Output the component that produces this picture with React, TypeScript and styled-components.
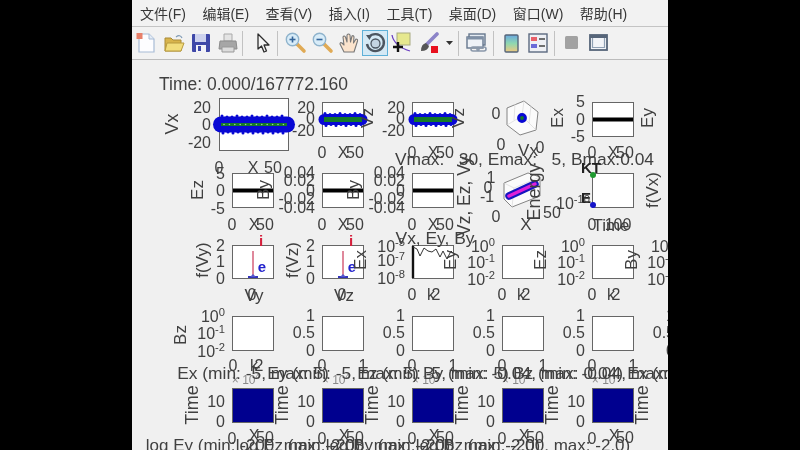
import React from "react";
import styled, { createGlobalStyle } from "styled-components";

const Global = createGlobalStyle`
  html, body { margin: 0; padding: 0; background: #000; width: 800px; height: 450px; overflow: hidden; }
  #root { width: 800px; height: 450px; }
`;

const Stage = styled.div`
  width: 800px;
  height: 450px;
  background: #000;
  display: flex;
  justify-content: center;
`;
const Win = styled.div`
  width: 536px;
  height: 450px;
  background: #f0f0f0;
  display: flex;
  flex-direction: column;
  overflow: hidden;
  filter: blur(0.65px);
`;
const MenuBar = styled.div`
  height: 27px;
  box-sizing: border-box;
  flex: none;
  display: flex;
  align-items: center;
  gap: 16.5px;
  padding: 0 0 0 8px;
  background: #f2f2f2;
  border-bottom: 1px solid #c4c4c4;
  font: 14px "Liberation Sans", "Noto Sans CJK SC", sans-serif;
  color: #383838;
`;
const MenuItem = styled.span`
  white-space: nowrap;
`;
const Toolbar = styled.div`
  height: 33px;
  box-sizing: border-box;
  flex: none;
  display: flex;
  align-items: center;
  padding-left: 1px;
  background: #f2f2f2;
  border-bottom: 1px solid #bcbcbc;
`;
const Tool = styled.div<{ $w?: number; $on?: boolean }>`
  width: ${(p) => p.$w ?? 27}px;
  height: 26px;
  box-sizing: border-box;
  flex: none;
  display: flex;
  align-items: center;
  justify-content: center;
  background: ${(p) => (p.$on ? "#d5e9f5" : "transparent")};
  border: ${(p) => (p.$on ? "1px solid #5fb0d8" : "none")};
`;
const Sep = styled.div<{ $l: number; $r: number }>`
  width: 1px;
  height: 25px;
  flex: none;
  margin: 0 ${(p) => p.$r}px 0 ${(p) => p.$l}px;
  background: #c2c2c2;
`;
const Canvas = styled.div`
  position: relative;
  flex: 1;
  overflow: hidden;
  font-family: "Liberation Sans", sans-serif;
  color: #404040;
`;
const OX = 132;
const OY = 60;
const Axes = styled.div<{ $x: number; $y: number; $w: number; $h: number; $fill?: string }>`
  position: absolute;
  left: ${(p) => p.$x - OX}px;
  top: ${(p) => p.$y - OY}px;
  width: ${(p) => p.$w}px;
  height: ${(p) => p.$h}px;
  box-sizing: border-box;
  border: 1px solid #666;
  background: ${(p) => p.$fill ?? "#fff"};
`;
const Overlay = styled.svg<{ $x: number; $y: number }>`
  position: absolute;
  left: ${(p) => p.$x - OX}px;
  top: ${(p) => p.$y - OY}px;
  overflow: visible;
`;
const Text = styled.span<{ $x: number; $y: number; $a: string; $rot?: boolean; $size: number; $color?: string; $bold?: boolean }>`
  position: absolute;
  left: ${(p) => p.$x - OX}px;
  top: ${(p) => p.$y - OY}px;
  transform: translate(${(p) => (p.$a === "r" ? "-100%" : p.$a === "l" ? "0" : "-50%")}, -50%) ${(p) => (p.$rot ? "rotate(-90deg)" : "")};
  font-size: ${(p) => p.$size}px;
  font-weight: ${(p) => (p.$bold ? 700 : 400)};
  color: ${(p) => p.$color ?? "inherit"};
  line-height: 1;
  white-space: pre;
`;
const Sup = styled.sup`
  font-size: 0.7em;
  vertical-align: 0.55em;
  line-height: 0;
`;

type L = { t: string; x: number; y: number; a?: string; rot?: boolean; s?: number; c?: string; b?: boolean };
const COLS = [232, 322, 412, 502, 592];
const TITLE = 17.4;

const labels: L[] = [
  { t: "Time: 0.000/167772.160", x: 159, y: 85, a: "l", s: 17.5 },
  { t: "Vx", x: 172, y: 124, rot: true, s: 18 },
  { t: "20", x: 211, y: 108, a: "r" }, { t: "0", x: 211, y: 125, a: "r" }, { t: "-20", x: 211, y: 143, a: "r" },
  { t: "0", x: 219, y: 168 }, { t: "X", x: 253, y: 168 }, { t: "50", x: 273, y: 168 },

  { t: "20", x: 315, y: 108, a: "r" }, { t: "0", x: 315, y: 119, a: "r" }, { t: "-20", x: 315, y: 131, a: "r" },
  { t: "Vz", x: 367, y: 118, rot: true },
  { t: "0", x: 322, y: 153 }, { t: "X", x: 343, y: 153 }, { t: "50", x: 355, y: 153 },
  { t: "20", x: 405, y: 108, a: "r" }, { t: "0", x: 405, y: 119, a: "r" }, { t: "-20", x: 405, y: 131, a: "r" },
  { t: "Vz", x: 458, y: 118, rot: true },
  { t: "0", x: 412, y: 153 }, { t: "X", x: 433, y: 153 }, { t: "50", x: 445, y: 153 },

  { t: "0", x: 496, y: 114 }, { t: "0", x: 501, y: 145 }, { t: "Vx", x: 528, y: 150, s: 17 }, { t: "0", x: 540, y: 148 },
  { t: "Ex", x: 557, y: 118, rot: true },
  { t: "5", x: 585, y: 102, a: "r" }, { t: "0", x: 585, y: 120, a: "r" }, { t: "-5", x: 585, y: 137, a: "r" },
  { t: "Ey", x: 647, y: 118, rot: true },
  { t: "0", x: 592, y: 153 }, { t: "X", x: 613, y: 153 }, { t: "50", x: 625, y: 153 },
  { t: "Vmax:   30, Emax:   5, Bmax:0.04", x: 395, y: 160, a: "l", s: TITLE },

  { t: "Ez", x: 197, y: 190, rot: true },
  { t: "5", x: 225, y: 174, a: "r" }, { t: "0", x: 225, y: 191, a: "r" }, { t: "-5", x: 225, y: 209, a: "r" },
  { t: "0", x: 232, y: 225 }, { t: "X", x: 254, y: 225 }, { t: "50", x: 265, y: 225 },
  { t: "By", x: 263, y: 190, rot: true },
  { t: "By", x: 353, y: 190, rot: true },
  { t: "0", x: 322, y: 225 }, { t: "X", x: 343, y: 225 }, { t: "50", x: 355, y: 225 },
  ...[315, 405].flatMap((x) => [
    { t: "0.04", x, y: 173, a: "r" }, { t: "0.02", x, y: 181, a: "r" }, { t: "0", x, y: 191, a: "r" },
    { t: "-0.02", x, y: 199, a: "r" }, { t: "-0.04", x, y: 208, a: "r" },
  ]),
  { t: "0", x: 412, y: 225 }, { t: "X", x: 433, y: 225 }, { t: "50", x: 445, y: 225 },
  { t: "Vz, Ez, Vy", x: 465, y: 196, rot: true, s: 17.5 },
  { t: "1", x: 491, y: 178 }, { t: "0", x: 488, y: 188 }, { t: "-1", x: 487, y: 197 },
  { t: "0", x: 496, y: 217 }, { t: "X", x: 526, y: 224, s: 17 }, { t: "50", x: 552, y: 213 },
  { t: "Energy", x: 534, y: 192, rot: true, s: 18 },
  { t: "KT", x: 591, y: 167, s: 15, b: true, c: "#222" },
  { t: "E", x: 586, y: 197, s: 15, b: true, c: "#222" },
  { t: "10^-10", x: 590, y: 204, a: "r" },
  { t: "f(Vx)", x: 652, y: 190, rot: true },
  { t: "0", x: 592, y: 225 }, { t: "Time", x: 611, y: 225, s: 17 }, { t: "100", x: 618, y: 225 },

  { t: "f(Vy)", x: 202, y: 260, rot: true },
  { t: "f(Vz)", x: 292, y: 260, rot: true },
  ...[225, 315].flatMap((x) => [
    { t: "2", x, y: 246, a: "r" }, { t: "1", x, y: 262, a: "r" }, { t: "0", x, y: 279, a: "r" },
  ]),
  { t: "0", x: 252, y: 295 }, { t: "Vy", x: 254, y: 295, s: 17 },
  { t: "0", x: 342, y: 295 }, { t: "Vz", x: 344, y: 295, s: 17 },
  { t: "i", x: 261, y: 240, s: 15, b: true, c: "#d5203c" },
  { t: "i", x: 351, y: 240, s: 15, b: true, c: "#d5203c" },
  { t: "e", x: 262, y: 266, s: 15, b: true, c: "#2222cc" },
  { t: "e", x: 352, y: 266, s: 15, b: true, c: "#2222cc" },
  { t: "Ex", x: 360, y: 260, rot: true },
  { t: "Vx, Ey, By", x: 435, y: 239, s: TITLE },
  { t: "10^-5", x: 405, y: 247, a: "r" }, { t: "10^-7", x: 405, y: 261, a: "r" }, { t: "10^-8", x: 405, y: 279, a: "r" },
  { t: "Ey", x: 450, y: 260, rot: true },
  { t: "0", x: 412, y: 295 }, { t: "k", x: 431, y: 295 }, { t: "2", x: 436, y: 295 },
  ...[495, 585, 675].flatMap((x) => [
    { t: "10^0", x, y: 247, a: "r" }, { t: "10^-1", x, y: 263, a: "r" }, { t: "10^-2", x, y: 280, a: "r" },
  ]),
  { t: "Ez", x: 540, y: 260, rot: true },
  { t: "By", x: 631, y: 260, rot: true },
  { t: "0", x: 502, y: 295 }, { t: "k", x: 521, y: 295 }, { t: "2", x: 526, y: 295 },
  { t: "0", x: 592, y: 295 }, { t: "k", x: 611, y: 295 }, { t: "2", x: 616, y: 295 },

  { t: "Bz", x: 180, y: 335, rot: true },
  { t: "10^0", x: 225, y: 317, a: "r" }, { t: "10^-1", x: 225, y: 334, a: "r" }, { t: "10^-2", x: 225, y: 352, a: "r" },
  ...[315, 405, 495, 585, 675].flatMap((x) => [
    { t: "1", x, y: 316, a: "r" }, { t: "0.5", x, y: 333, a: "r" }, { t: "0", x, y: 351, a: "r" },
  ]),
  { t: "0", x: 233, y: 366 }, { t: "k", x: 254, y: 366 }, { t: "2", x: 259, y: 366 },
  ...COLS.slice(1).flatMap((x) => [{ t: "0", x, y: 366 }, { t: "1", x: x + 41, y: 366 }]),

  ...COLS.map((x) => ({ t: "× 10^4", x: x + 14, y: 380, s: 12, c: "#8a8a8a" })),
  { t: "Ex (min: -5, max: 5)", x: 253, y: 374, s: TITLE },
  { t: "Ey (min: -5, max: 5)", x: 343, y: 374, s: TITLE },
  { t: "Ez (min: -5, max: 5)", x: 433, y: 374, s: TITLE },
  { t: "By (min: -0.04, max: 0.04)", x: 523, y: 374, s: TITLE },
  { t: "Bz (min: -0.04, max: 0.04)", x: 613, y: 374, s: TITLE },
  { t: "Ex (min: -5, max: 5)", x: 703, y: 374, s: TITLE },

  ...COLS.flatMap((x) => [
    { t: "10", x: x - 7, y: 402, a: "r" },
    { t: "0", x: x - 7, y: 422, a: "r" },
    { t: "Time", x: x - 40, y: 405, rot: true, s: 18 },
    { t: "0", x, y: 439 },
    { t: "X", x: x + 22, y: 436 },
    { t: "50", x: x + 33, y: 438 },
  ]),
  { t: "Time", x: 642, y: 405, rot: true, s: 18 },
  { t: "log Ey (min: -200, max: -2.0)", x: 253, y: 445, s: 17 },
  { t: "log Ez (min: -200, max: -2.0)", x: 343, y: 445, s: 17 },
  { t: "log By (min: -200, max: -2.0)", x: 433, y: 445, s: 17 },
  { t: "log Bz (min: -200, max: -2.0)", x: 523, y: 445, s: 17 },
];

const renderText = (t: string) => {
  const i = t.indexOf("^");
  if (i < 0) return t;
  return (
    <>
      {t.slice(0, i)}
      <Sup>{t.slice(i + 1)}</Sup>
    </>
  );
};

const Band = ({ w, h, t, g, hot }: { w: number; h: number; t: number; g: number; hot?: boolean }) => (
  <svg width={w} height={h} style={{ display: "block", overflow: "visible" }}>
    <line x1={1} x2={w - 1} y1={h / 2} y2={h / 2} stroke="#0808d4" strokeWidth={t} strokeLinecap="round" />
    <line x1={1} x2={w - 1} y1={h / 2} y2={h / 2} stroke="#167a28" strokeWidth={g} />
    {Array.from({ length: Math.floor(w / 5) }, (_, i) => (
      <circle key={i} cx={2 + i * 5} cy={h / 2 - t / 2 + (i % 3 === 0 ? -0.5 : 0.5)} r={1.5} fill="#0808d4" />
    ))}
    {Array.from({ length: Math.floor(w / 5) }, (_, i) => (
      <circle key={i} cx={3 + i * 5} cy={h / 2 + t / 2 + (i % 2 === 0 ? 0.5 : -0.5)} r={1.5} fill="#0808d4" />
    ))}
    {hot &&
      Array.from({ length: 12 }, (_, i) => (
        <circle key={i} cx={4 + i * 5.4} cy={h / 2} r={0.8} fill="#9ad0a0" />
      ))}
  </svg>
);
const BlackLine = ({ w, h }: { w: number; h: number }) => (
  <svg width={w} height={h} style={{ display: "block" }}>
    <line x1={0} x2={w} y1={h / 2} y2={h / 2} stroke="#000" strokeWidth={4} />
  </svg>
);
const Spike = () => (
  <svg width={40} height={31} style={{ display: "block", overflow: "visible" }}>
    <line x1={20} x2={20} y1={5} y2={31} stroke="#d5607a" strokeWidth={1.5} />
    <line x1={15} x2={25} y1={31} y2={31} stroke="#3333bb" strokeWidth={2} />
    <path d="M17 31 L20 28 L23 31Z" fill="#5555cc" />
  </svg>
);
const Jag = () => (
  <svg width={40} height={31} style={{ display: "block", overflow: "visible" }}>
    <line x1={0} x2={0} y1={0} y2={32} stroke="#111" strokeWidth={2.4} />
    <polyline
      points="0,1 4,3 7,10 11,2 15,5 19,6 23,3 27,11 30,5 34,13 38,5 41,8"
      fill="none"
      stroke="#333"
      strokeWidth={1}
    />
  </svg>
);

const Cube = ({ x, y, pts, inner, children }: { x: number; y: number; pts: string; inner: string; children: React.ReactNode }) => (
  <Overlay $x={x} $y={y} width={44} height={44} viewBox="0 0 44 44">
    <polygon points={pts} fill="#fbfbfb" stroke="#777" strokeWidth={0.9} />
    <path d={inner} stroke="#d8d8d8" strokeWidth={0.7} fill="none" />
    {children}
  </Overlay>
);

const I = ({ children, w = 22, h = 22 }: { children: React.ReactNode; w?: number; h?: number }) => (
  <svg width={w} height={h} viewBox={`0 0 ${w} ${h}`}>
    {children}
  </svg>
);

const Magnifier = ({ plus }: { plus?: boolean }) => (
  <I>
    <line x1={12} y1={12} x2={19} y2={19} stroke="#e0aa55" strokeWidth={3.6} strokeLinecap="round" />
    <circle cx={7.5} cy={7.5} r={6.2} fill="#d8ecf8" stroke="#8fb3cc" strokeWidth={1.4} />
    <line x1={4.5} y1={7.5} x2={10.5} y2={7.5} stroke="#35659a" strokeWidth={1.6} />
    {plus && <line x1={7.5} y1={4.5} x2={7.5} y2={10.5} stroke="#35659a" strokeWidth={1.6} />}
  </I>
);

const menu = ["文件(F)", "编辑(E)", "查看(V)", "插入(I)", "工具(T)", "桌面(D)", "窗口(W)", "帮助(H)"];

export default function App() {
  return (
    <Stage>
      <Global />
      <Win>
        <MenuBar>
          {menu.map((m) => (
            <MenuItem key={m}>{m}</MenuItem>
          ))}
        </MenuBar>
        <Toolbar>
          <Tool>
            <I>
              <path d="M3 2 H13 L18 7 V20 H3Z" fill="#fdfdff" stroke="#a8bcd6" strokeWidth={1.2} />
              <path d="M13 2 V7 H18" fill="#e4ecf6" stroke="#a8bcd6" />
              <rect x={0.5} y={1} width={6} height={6} fill="#e8806a" />
            </I>
          </Tool>
          <Tool>
            <I>
              <path d="M2 6 H8 L10 8 H18 V19 H2Z" fill="#d8b44c" stroke="#a98a36" />
              <path d="M2 19 L4 11 H21 L18 19Z" fill="#f2dd7c" stroke="#b89a3e" />
              <path d="M13 5 Q17 2 19 6" fill="none" stroke="#7f9ab5" strokeWidth={1.2} />
            </I>
          </Tool>
          <Tool>
            <I>
              <rect x={2} y={2} width={18} height={18} rx={1} fill="#3f48a8" />
              <rect x={5} y={2} width={11} height={8} fill="#cdd2ee" />
              <rect x={6} y={13} width={10} height={7} fill="#f2f2f8" />
              <rect x={8} y={14} width={3} height={5} fill="#3f48a8" />
            </I>
          </Tool>
          <Tool>
            <I>
              <path d="M7 2 H15 V9 H7Z" fill="#e4e4e4" stroke="#aaa" />
              <path d="M3 9 H19 L20 17 H2Z" fill="#a6a6a6" stroke="#8c8c8c" />
              <path d="M5 15 H17 V20 H5Z" fill="#dcdcdc" stroke="#999" />
            </I>
          </Tool>
          <Sep $l={1} $r={6} />
          <Tool>
            <I>
              <path d="M6 2 L6 17 L9.5 14 L12 20 L14.5 19 L12 13 L17 13Z" fill="#f4f4f4" stroke="#2c2c2c" strokeWidth={1.3} strokeLinejoin="round" />
            </I>
          </Tool>
          <Sep $l={1} $r={4} />
          <Tool><Magnifier plus /></Tool>
          <Tool><Magnifier /></Tool>
          <Tool $w={26}>
            <I>
              <path d="M6 20 L2 12 Q2 10 4 11 L6 13 L5 5 Q6 3 7.5 5 L9 10 L9 3 Q10.5 1 12 3 L12.5 10 L14 4 Q15.5 3 16 5 L15.5 11 L18 7 Q20 7 19.5 9 L16 20Z" fill="#fbe3cc" stroke="#777" strokeWidth={1.1} strokeLinejoin="round" />
            </I>
          </Tool>
          <Tool $w={26} $on>
            <I>
              <path d="M5 5 A8.5 8.5 0 1 1 3 12" fill="none" stroke="#4c5560" strokeWidth={2.4} />
              <path d="M2 3 L8 3 L5.5 8Z" fill="#4c5560" />
              <circle cx={11.5} cy={11.5} r={4.5} fill="#c4d4e2" stroke="#4c5560" strokeWidth={1.3} />
            </I>
          </Tool>
          <Tool $w={26}>
            <I>
              <rect x={7} y={1} width={13} height={12} fill="#e6e88e" stroke="#a8aa80" />
              <path d="M2 3 Q4 14 20 19" fill="none" stroke="#6a3ec0" strokeWidth={1.3} />
              <path d="M8 10 V20 M3 15 H13" stroke="#111" strokeWidth={2.4} />
            </I>
          </Tool>
          <Tool $w={30}>
            <I>
              <line x1={9} y1={12} x2={19} y2={2} stroke="#8c84c8" strokeWidth={3.6} strokeLinecap="round" />
              <path d="M3 19 Q3 12 8 11 L11 14 Q10 19 3 19Z" fill="#555" />
              <rect x={13} y={14} width={7} height={7} fill="#e8101e" />
            </I>
          </Tool>
          <Tool $w={10}>
            <I w={7} h={4}>
              <path d="M0 0 H7 L3.5 4Z" fill="#333" />
            </I>
          </Tool>
          <Sep $l={4} $r={4} />
          <Tool>
            <I>
              <rect x={3} y={2} width={16} height={11} fill="#e4ebf3" stroke="#67788e" strokeWidth={1.4} />
              <rect x={1} y={5} width={16} height={11} fill="#eef2f7" stroke="#67788e" strokeWidth={1.4} />
              <rect x={1} y={5} width={16} height={2.5} fill="#7f90a6" />
              <rect x={5} y={15} width={8} height={4} rx={2} fill="none" stroke="#8a98aa" strokeWidth={1.6} />
              <rect x={11} y={15} width={9} height={4} rx={2} fill="none" stroke="#8a98aa" strokeWidth={1.6} />
            </I>
          </Tool>
          <Sep $l={3} $r={4} />
          <Tool>
            <I w={16} h={22}>
              <defs>
                <linearGradient id="cb" x1="0" y1="0" x2="0" y2="1">
                  <stop offset="0" stopColor="#6aa8e0" />
                  <stop offset="0.5" stopColor="#8fd8b0" />
                  <stop offset="1" stopColor="#f0c880" />
                </linearGradient>
              </defs>
              <rect x={1} y={3} width={13} height={17} rx={1} fill="url(#cb)" stroke="#56657a" strokeWidth={1.4} />
            </I>
          </Tool>
          <Tool $w={26}>
            <I w={20} h={20}>
              <rect x={1} y={1} width={18} height={18} fill="#eef0f5" stroke="#5c6a80" strokeWidth={1.4} />
              <rect x={3} y={4} width={6} height={4} fill="#e8606a" />
              <rect x={3} y={11} width={6} height={4} fill="#6a6ad8" />
              <path d="M11 6 H17 M11 13 H17" stroke="#444" strokeWidth={1.4} />
            </I>
          </Tool>
          <Sep $l={3} $r={3} />
          <Tool>
            <I w={14} h={14}>
              <rect width={13} height={13} rx={1.5} fill="#a2a2a2" />
            </I>
          </Tool>
          <Tool>
            <I w={19} h={18}>
              <rect x={1} y={1} width={17} height={15} fill="#f2f4f8" stroke="#566579" strokeWidth={1.8} />
              <rect x={1} y={1} width={17} height={3} fill="#566579" />
              <path d="M3.5 4 V13.5 H15.5 V4" fill="none" stroke="#8fa0b4" strokeWidth={1.2} />
            </I>
          </Tool>
        </Toolbar>
        <Canvas>
          <Axes $x={219} $y={98} $w={70} $h={53}>
            <Band w={68} h={51} t={16} g={3} hot />
          </Axes>
          <Axes $x={322} $y={102} $w={42} $h={35}>
            <Band w={40} h={33} t={11} g={5} />
          </Axes>
          <Axes $x={412} $y={102} $w={42} $h={35}>
            <Band w={40} h={33} t={11} g={5} />
          </Axes>
          <Axes $x={592} $y={102} $w={42} $h={35}>
            <BlackLine w={40} h={33} />
          </Axes>
          {[232, 322, 412].map((x) => (
            <Axes key={x} $x={x} $y={173} $w={42} $h={35}>
              <BlackLine w={40} h={33} />
            </Axes>
          ))}
          <Axes $x={592} $y={173} $w={42} $h={35} />
          <Axes $x={232} $y={245} $w={42} $h={34}><Spike /></Axes>
          <Axes $x={322} $y={245} $w={42} $h={34}><Spike /></Axes>
          <Axes $x={412} $y={245} $w={42} $h={34}><Jag /></Axes>
          <Axes $x={502} $y={245} $w={42} $h={34} />
          <Axes $x={592} $y={245} $w={42} $h={34} />
          {COLS.map((x) => (
            <Axes key={x} $x={x} $y={316} $w={42} $h={35} />
          ))}
          {COLS.map((x) => (
            <Axes key={x} $x={x} $y={388} $w={42} $h={35} $fill="#00008f" />
          ))}
          <Cube x={502} y={96} pts="22,5 36,16 34,34 18,39 5,29 5,12" inner="M20 20 L22 5 M20 20 L5 29 M20 20 L34 34 M13 8 L12 24 M29 10 L27 27">
            <circle cx={20} cy={22} r={3.4} fill="#167a28" stroke="#0808d4" strokeWidth={3} />
          </Cube>
          <Cube x={498} y={166} pts="6,17 30,7 42,11 42,30 14,41 6,33" inner="M16 22 L42 11 M16 22 L14 41 M16 22 L6 17">
            <line x1={11} y1={30} x2={37} y2={18} stroke="#1616c0" strokeWidth={7.5} strokeLinecap="round" />
            <line x1={11} y1={30} x2={37} y2={18} stroke="#e020d8" strokeWidth={3.5} strokeLinecap="round" />
          </Cube>
          <Overlay $x={588} $y={170} width={10} height={40} viewBox="0 0 10 40">
            <circle cx={5} cy={5} r={3} fill="#1f9a30" />
            <circle cx={5} cy={35} r={3} fill="#1414c8" />
          </Overlay>
          {labels.map((l, i) => (
            <Text key={i} $x={l.x} $y={l.y} $a={l.a ?? "c"} $rot={l.rot} $size={l.s ?? (l.rot ? 17 : 16)} $color={l.c} $bold={l.b}>
              {renderText(l.t)}
            </Text>
          ))}
        </Canvas>
      </Win>
    </Stage>
  );
}
